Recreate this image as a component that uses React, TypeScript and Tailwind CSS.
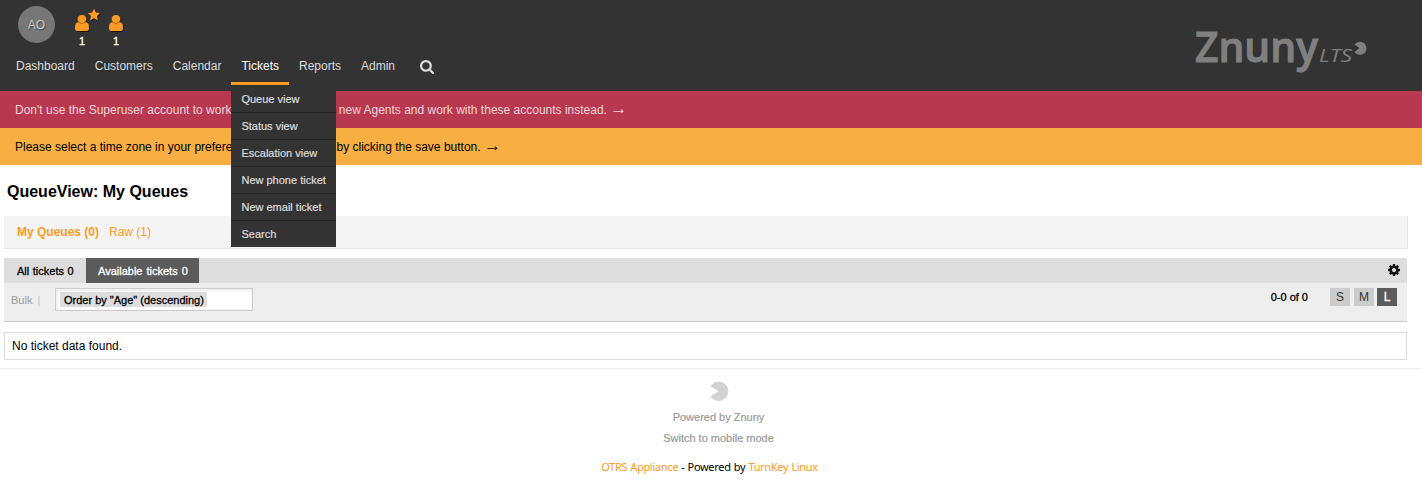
import React from "react";

const USER =
  "M1280 1399q0 109-62.5 187t-150.5 78h-854q-88 0-150.5-78t-62.5-187q0-85 8.5-160.5t31.5-152 58.5-131 94-89 134.5-34.5q131 128 313 128t313-128q76 0 134.5 34.5t94 89 58.5 131 31.5 152 8.5 160.5zm-256-887q0 159-112.5 271.5t-271.5 112.5-271.5-112.5-112.5-271.5 112.5-271.5 271.5-112.5 271.5 112.5 112.5 271.5z";
const STAR =
  "M1664 615q0 22-26 48l-363 354 86 500q1 7 1 20 0 21-10.5 35.5t-30.5 14.5q-19 0-40-12l-449-236-449 236q-22 12-40 12-21 0-31.5-14.5t-10.5-35.5q0-6 2-20l86-500-364-354q-25-27-25-48 0-37 56-46l502-73 225-455q19-41 49-41t49 41l225 455 502 73q56 9 56 46z";
const SEARCH =
  "M1152 704q0-185-131.5-316.5t-316.5-131.5-316.5 131.5-131.5 316.5 131.5 316.5 316.5 131.5 316.5-131.5 131.5-316.5zm512 832q0 52-38 90t-90 38q-54 0-90-38l-343-342q-179 124-399 124-143 0-273.5-55.5t-225-150-150-225-55.5-273.5 55.5-273.5 150-225 225-150 273.5-55.5 273.5 55.5 225 150 150 225 55.5 273.5q0 220-124 399l343 343q37 37 37 90z";
const COG =
  "M1024 640q0-106-75-181t-181-75-181 75-75 181 75 181 181 75 181-75 75-181zm512-109v222q0 12-8 23t-20 13l-185 28q-19 54-39 91 35 50 107 138 10 12 10 25t-9 23q-27 37-99 108t-94 71q-12 0-26-9l-138-108q-44 23-91 38-16 136-29 186-7 28-36 28h-222q-14 0-24.5-8.5t-11.5-21.5l-28-184q-49-16-90-37l-141 107q-10 9-25 9-14 0-25-11-126-114-165-168-7-10-7-23 0-12 8-23 15-21 51-66.5t54-70.5q-27-50-41-99l-183-27q-13-2-21-12.5t-8-23.5v-222q0-12 8-23t19-13l186-28q14-46 39-92-40-57-107-138-10-12-10-24 0-10 9-23 26-36 98.5-107.5t94.5-71.5q13 0 26 10l138 107q44-23 91-38 16-136 29-186 7-28 36-28h222q14 0 24.5 8.5t11.5 21.5l28 184q49 16 90 37l142-107q9-9 24-9 13 0 25 10 129 119 165 170 7 8 7 22 0 12-8 23-15 21-51 66.5t-54 70.5q26 50 41 98l183 28q13 2 21 12.5t8 23.5z";

const menu = ["Queue view", "Status view", "Escalation view", "New phone ticket", "New email ticket", "Search"];

function UserCount({ starred = false }: { starred?: boolean }) {
  return (
    <div className="relative flex w-[34px] flex-col items-center">
      <svg className="h-4 w-3.5 drop-shadow-[1px_1px_0_rgba(0,0,0,0.6)]" viewBox="0 128 1280 1536" preserveAspectRatio="none">
        <path fill="#ff9b25" stroke="#ff9b25" strokeWidth="40" d={USER} />
      </svg>
      {starred && (
        <svg className="absolute top-[-6px] left-[23px] h-[11px] w-3 drop-shadow-[1px_1px_0_rgba(0,0,0,0.6)]" viewBox="0 0 1664 1587">
          <path fill="#ff9b25" d={STAR} />
        </svg>
      )}
      <span className="mt-[3px] text-[11px] leading-[14px] text-white [-webkit-text-stroke:0.3px]">1</span>
    </div>
  );
}

function NavItem({ label }: { label: string }) {
  return <div className="h-[29px] px-2.5 pt-[3px] leading-[14px] text-[#ddd]">{label}</div>;
}

function Logo() {
  return (
    <svg className="h-[50px] w-[176px] overflow-visible" viewBox="0 0 176 50" fill="#808080">
      <text
        x="0"
        y="35.5"
        fontFamily="Open Sans, Noto Sans, sans-serif"
        fontWeight="600"
        fontSize="42"
        textLength="123"
        lengthAdjust="spacingAndGlyphs"
        stroke="#808080"
        strokeWidth="1"
      >
        Znuny
      </text>
      <text x="124" y="35.5" fontFamily="Open Sans, Noto Sans, sans-serif" fontStyle="italic" fontWeight="500" fontSize="17.5" textLength="33" lengthAdjust="spacingAndGlyphs">
        LTS
      </text>
      <path d="M164.500 22 L159.500 18.500 A6.600 6.600 0 1 1 159.500 26 Z" />
    </svg>
  );
}

function Arrow() {
  return <span className="text-[17px] leading-none">→</span>;
}

function Header() {
  return (
    <header className="flex h-[91px] justify-between bg-[#333]">
      <div className="flex flex-col">
        <div className="flex h-14 items-start pl-[18px]">
          <div className="mt-[6px] flex size-[37px] items-center justify-center rounded-full bg-[#777] pt-px text-[#ccc] [text-shadow:1px_1px_1px_#444]">
            AO
          </div>
          <div className="mt-[15px] ml-[10px] flex">
            <UserCount starred />
            <UserCount />
          </div>
        </div>
        <nav className="flex pl-[6px]">
          <NavItem label="Dashboard" />
          <NavItem label="Customers" />
          <NavItem label="Calendar" />
          <div className="relative h-[29px] border-b-[3px] border-[#ff9b25] px-2.5 pt-[3px] leading-[14px] text-white">
            Tickets
            <ul className="absolute top-[30px] left-0 z-10 w-[105px] bg-[#333] text-[11px] text-[#ddd] [-webkit-text-stroke:0.2px]">
              {menu.map((item) => (
                <li
                  key={item}
                  className="h-[27px] border-b border-[#222] pl-2.5 leading-[26px] whitespace-nowrap last:h-[26px] last:border-0"
                >
                  {item}
                </li>
              ))}
            </ul>
          </div>
          <NavItem label="Reports" />
          <NavItem label="Admin" />
          <svg className="mt-1 ml-[15px] size-3.5" viewBox="0 0 1664 1664">
            <path fill="#ddd" d={SEARCH} />
          </svg>
        </nav>
      </div>
      <div className="mt-[26px] mr-[51px]">
        <Logo />
      </div>
    </header>
  );
}

export default function App() {
  return (
    <div className="min-h-[494px] bg-white font-['Liberation_Sans',Arial,sans-serif] text-xs text-black">
      <Header />
      <div className="h-[37px] bg-[#b8394f] pl-[15px] leading-[38px] text-[#f2d3d8]">
        Don't use the Superuser account to work with Znuny! Create new Agents and work with these accounts instead. <Arrow />
      </div>
      <div className="h-[37px] bg-[#f7ae42] pl-[15px] leading-[38px]">
        Please select a time zone in your preferences and confirm it by clicking the save button. <Arrow />
      </div>
      <main className="pr-[15px] pl-1">
        <h1 className="h-[51px] pl-[3px] text-base leading-[53px] font-bold">QueueView: My Queues</h1>
        <div className="mr-[-1px] flex h-[33px] gap-2.5 border-r border-b border-[#e6e6e6] bg-[#f4f4f4] pl-[13px] leading-[32px] text-[#ff9b25]">
          <span className="font-bold">My Queues (0)</span>
          <span>Raw (1)</span>
        </div>
        <div className="mt-[9px] flex h-[25px] items-center bg-[#ddd] text-[11px] [-webkit-text-stroke:0.3px]">
          <div className="w-[82px] pt-px pl-[13px] [word-spacing:0.5px]">All tickets 0</div>
          <div className="flex h-full w-[113px] items-center bg-[#5b5b5b] pt-px pl-3 text-white [word-spacing:1px]">Available tickets 0</div>
          <svg className="mr-[7px] mb-px ml-auto size-3" viewBox="0 -128 1536 1536">
            <path fill="#111" d={COG} />
          </svg>
        </div>
        <div className="flex h-[39px] items-start border-b border-[#c8c8c8] bg-[#eee] pt-[5px] text-[11px]">
          <div className="w-[51px] pl-[7px] leading-[25px] text-[#999]">
            Bulk <span className="ml-0.5 text-[#ccc] [-webkit-text-stroke:0.3px]">|</span>
          </div>
          <div className="flex h-[23px] w-[198px] items-center border border-[#ccc] bg-white pl-1 shadow-[inset_1px_1px_4px_rgba(0,0,0,0.1)]">
            <span className="h-[15px] w-[147px] bg-[#ddd] pl-1 leading-[16px] whitespace-nowrap [-webkit-text-stroke:0.3px]">
              Order by "Age" (descending)
            </span>
          </div>
          <div className="ml-auto flex gap-1 text-xs leading-[18px] text-[#333]">
            <span className="mr-[18px] text-[11px] text-black [-webkit-text-stroke:0.3px]">0-0 of 0</span>
            <span className="w-5 bg-[#ccc] text-center">S</span>
            <span className="w-5 bg-[#ccc] text-center">M</span>
            <span className="mr-2.5 ml-[-1px] w-5 bg-[#5b5b5b] text-center text-white [-webkit-text-stroke:0.3px]">L</span>
          </div>
        </div>
        <div className="mt-2.5 h-7 border border-[#ddd] pl-[7px] leading-[26px]">No ticket data found.</div>
      </main>
      <footer className="mt-2 border-t border-[#eee] pt-3 text-center text-[11px] text-[#999]">
        <div className="flex flex-col items-center pl-[15px]">
          <svg className="h-5 w-[19px] overflow-visible" viewBox="0 0 19 20">
            <path fill="#d2d2d2" d="M9.500 10.300 L1.500 5.300 A9.600 9.600 0 1 1 1.500 15.300 Z" />
          </svg>
          <span className="mt-[9px] leading-[14px] [-webkit-text-stroke:0.2px]">Powered by Znuny</span>
          <span className="mt-[7px] leading-[14px] [-webkit-text-stroke:0.2px]">Switch to mobile mode</span>
        </div>
        <div className="mt-[15px] pr-[3px] font-['Noto_Sans',sans-serif] text-[11px] leading-[14px] tracking-[-0.32px] text-black [word-spacing:0.6px]">
          <span className="text-[#ff9b25]">OTRS Appliance</span> - Powered by <span className="text-[#ff9b25]">TurnKey Linux</span>
        </div>
      </footer>
    </div>
  );
}
